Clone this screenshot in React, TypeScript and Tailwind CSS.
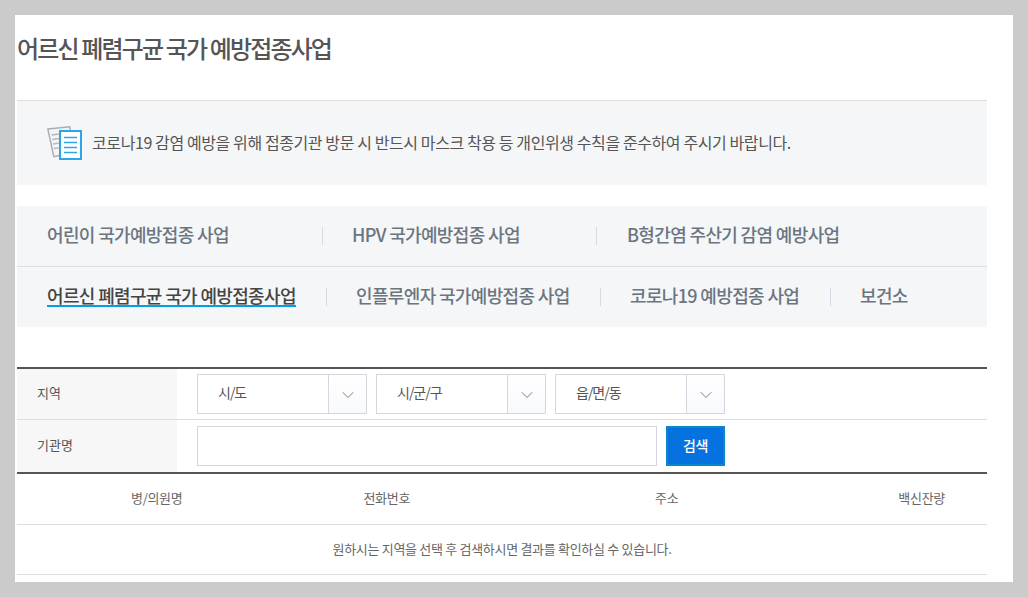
import { ChevronDown } from 'lucide-react'

const FONT = "font-['Noto_Sans_CJK_KR','Noto_Sans',sans-serif]"

function Sep() {
  return <span className="w-px h-[18px] bg-[#d5dbe2] shrink-0" />
}

function SelectBox({ label }: { label: string }) {
  return (
    <div className="w-[170px] h-10 flex border border-[#d5d6de] shrink-0">
      <div className="flex-1 pl-5 text-[14px] tracking-[-1px] leading-[35px] text-[#555]">{label}</div>
      <div className="w-[38px] border-l border-[#d5d6de] bg-gradient-to-b from-white to-[#f8f9fc] flex items-center justify-center">
        <ChevronDown className="w-5 h-5 text-[#666] mt-0.5" strokeWidth={1} />
      </div>
    </div>
  )
}

function DocIcon() {
  return (
    <svg width="36" height="36" viewBox="0 0 36 36" fill="none" className="shrink-0">
      <path d="M0.8 4 L22.800 1.700 L23.500 7 L13 7 L13 30.500 L6.800 31.700 Z" stroke="#a8acb2" strokeWidth="1.4" fill="#f3f4f5" />
      <path d="M4.500 10 L12 9 M5.200 14.500 L12 13.500 M6 19 L12 18.200 M6.800 23.500 L12 22.800" stroke="#b5b8bd" strokeWidth="1.3" />
      <rect x="13" y="6" width="21" height="28" fill="#fff" stroke="#2ea5e8" strokeWidth="2" />
      <path d="M17 12.500 H30 M17 17.500 H30 M17 22.500 H30 M17 27.500 H30" stroke="#2ea5e8" strokeWidth="1.7" />
    </svg>
  )
}

export default function App() {
  return (
    <div className={`${FONT} w-[1028px] h-[597px] bg-[#cbcbcb] pt-[15px] pl-[15px] overflow-hidden`}>
      <div className="w-[998px] h-[567px] bg-white pl-0.5 pr-[26px]">
        <h2 className="h-[85px] pt-[15px] text-[24px] leading-9 font-medium tracking-[-1.85px] text-[#555]">
          어르신 폐렴구균 국가 예방접종사업
        </h2>

        <div className="h-[85px] border-t border-[#ddd] bg-[#f5f6f8] flex items-center pl-[30px] gap-[9px]">
          <DocIcon />
          <p className="text-[16px] tracking-[-0.4px] text-[#555] pb-0.5">
            코로나19 감염 예방을 위해 접종기관 방문 시 반드시 마스크 착용 등 개인위생 수칙을 준수하여 주시기 바랍니다.
          </p>
        </div>

        <div className="mt-[21px] bg-[#f5f6f8] h-[121px] text-[18px] font-medium tracking-[-0.65px] text-[#6b7580]">
          <div className="h-[61px] border-b border-[#dcdfe5] flex items-center pl-[30px]">
            <span className="w-[275px] pb-1">어린이 국가예방접종 사업</span>
            <Sep />
            <span className="w-[273px] pl-[29px] pb-1">HPV 국가예방접종 사업</span>
            <Sep />
            <span className="pl-[30px] pb-1">B형간염 주산기 감염 예방사업</span>
          </div>
          <div className="h-[60px] flex items-center pl-[30px]">
            <span className="w-[279px] pb-1">
              <span className="text-[#444] border-b-2 border-[#00a0e9] leading-[22px] inline-block h-[23px]">어르신 폐렴구균 국가 예방접종사업</span>
            </span>
            <Sep />
            <span className="w-[273px] pl-[29px] pb-1">인플루엔자 국가예방접종 사업</span>
            <Sep />
            <span className="w-[229px] pl-[29px] pb-1">코로나19 예방접종 사업</span>
            <Sep />
            <span className="pl-[29px] pb-1">보건소</span>
          </div>
        </div>

        <div className="mt-10 border-t-2 border-[#555]">
          <div className="h-[51px] border-b border-[#ddd] flex">
            <div className="w-40 bg-[#f7f7f7] pl-5 pb-0.5 flex items-center text-[13px] text-[#555]">지역</div>
            <div className="flex-1 pl-5 pt-[5px] flex gap-[9px]">
              <SelectBox label="시/도" />
              <SelectBox label="시/군/구" />
              <SelectBox label="읍/면/동" />
            </div>
          </div>
          <div className="h-[52px] flex">
            <div className="w-40 bg-[#f7f7f7] pl-5 pb-0.5 flex items-center text-[13px] text-[#555]">기관명</div>
            <div className="flex-1 pl-5 pt-1.5 flex gap-[9px]">
              <div className="w-[460px] h-10 border border-[#d5d6de]" />
              <button className="w-[59px] h-10 pb-0.5 bg-[#0572e0] border-2 border-[#0a86cc] text-white text-[14px] font-medium tracking-[-0.5px]">검색</button>
            </div>
          </div>
        </div>

        <div className="border-t-2 border-[#555]">
          <div className="h-[51px] pb-0.5 border-b border-[#ddd] flex items-center text-[13px] tracking-[-0.3px] text-[#666]">
            <span className="w-[280px] text-center">병/의원명</span>
            <span className="w-[181px] text-center">전화번호</span>
            <span className="w-[380px] text-center">주소</span>
            <span className="w-[131px] text-center">백신잔량</span>
          </div>
          <div className="h-[50px] pb-px border-b border-[#ddd] flex items-center justify-center text-[13px] tracking-[-0.3px] text-[#666]">
            원하시는 지역을 선택 후 검색하시면 결과를 확인하실 수 있습니다.
          </div>
        </div>
      </div>
    </div>
  )
}
